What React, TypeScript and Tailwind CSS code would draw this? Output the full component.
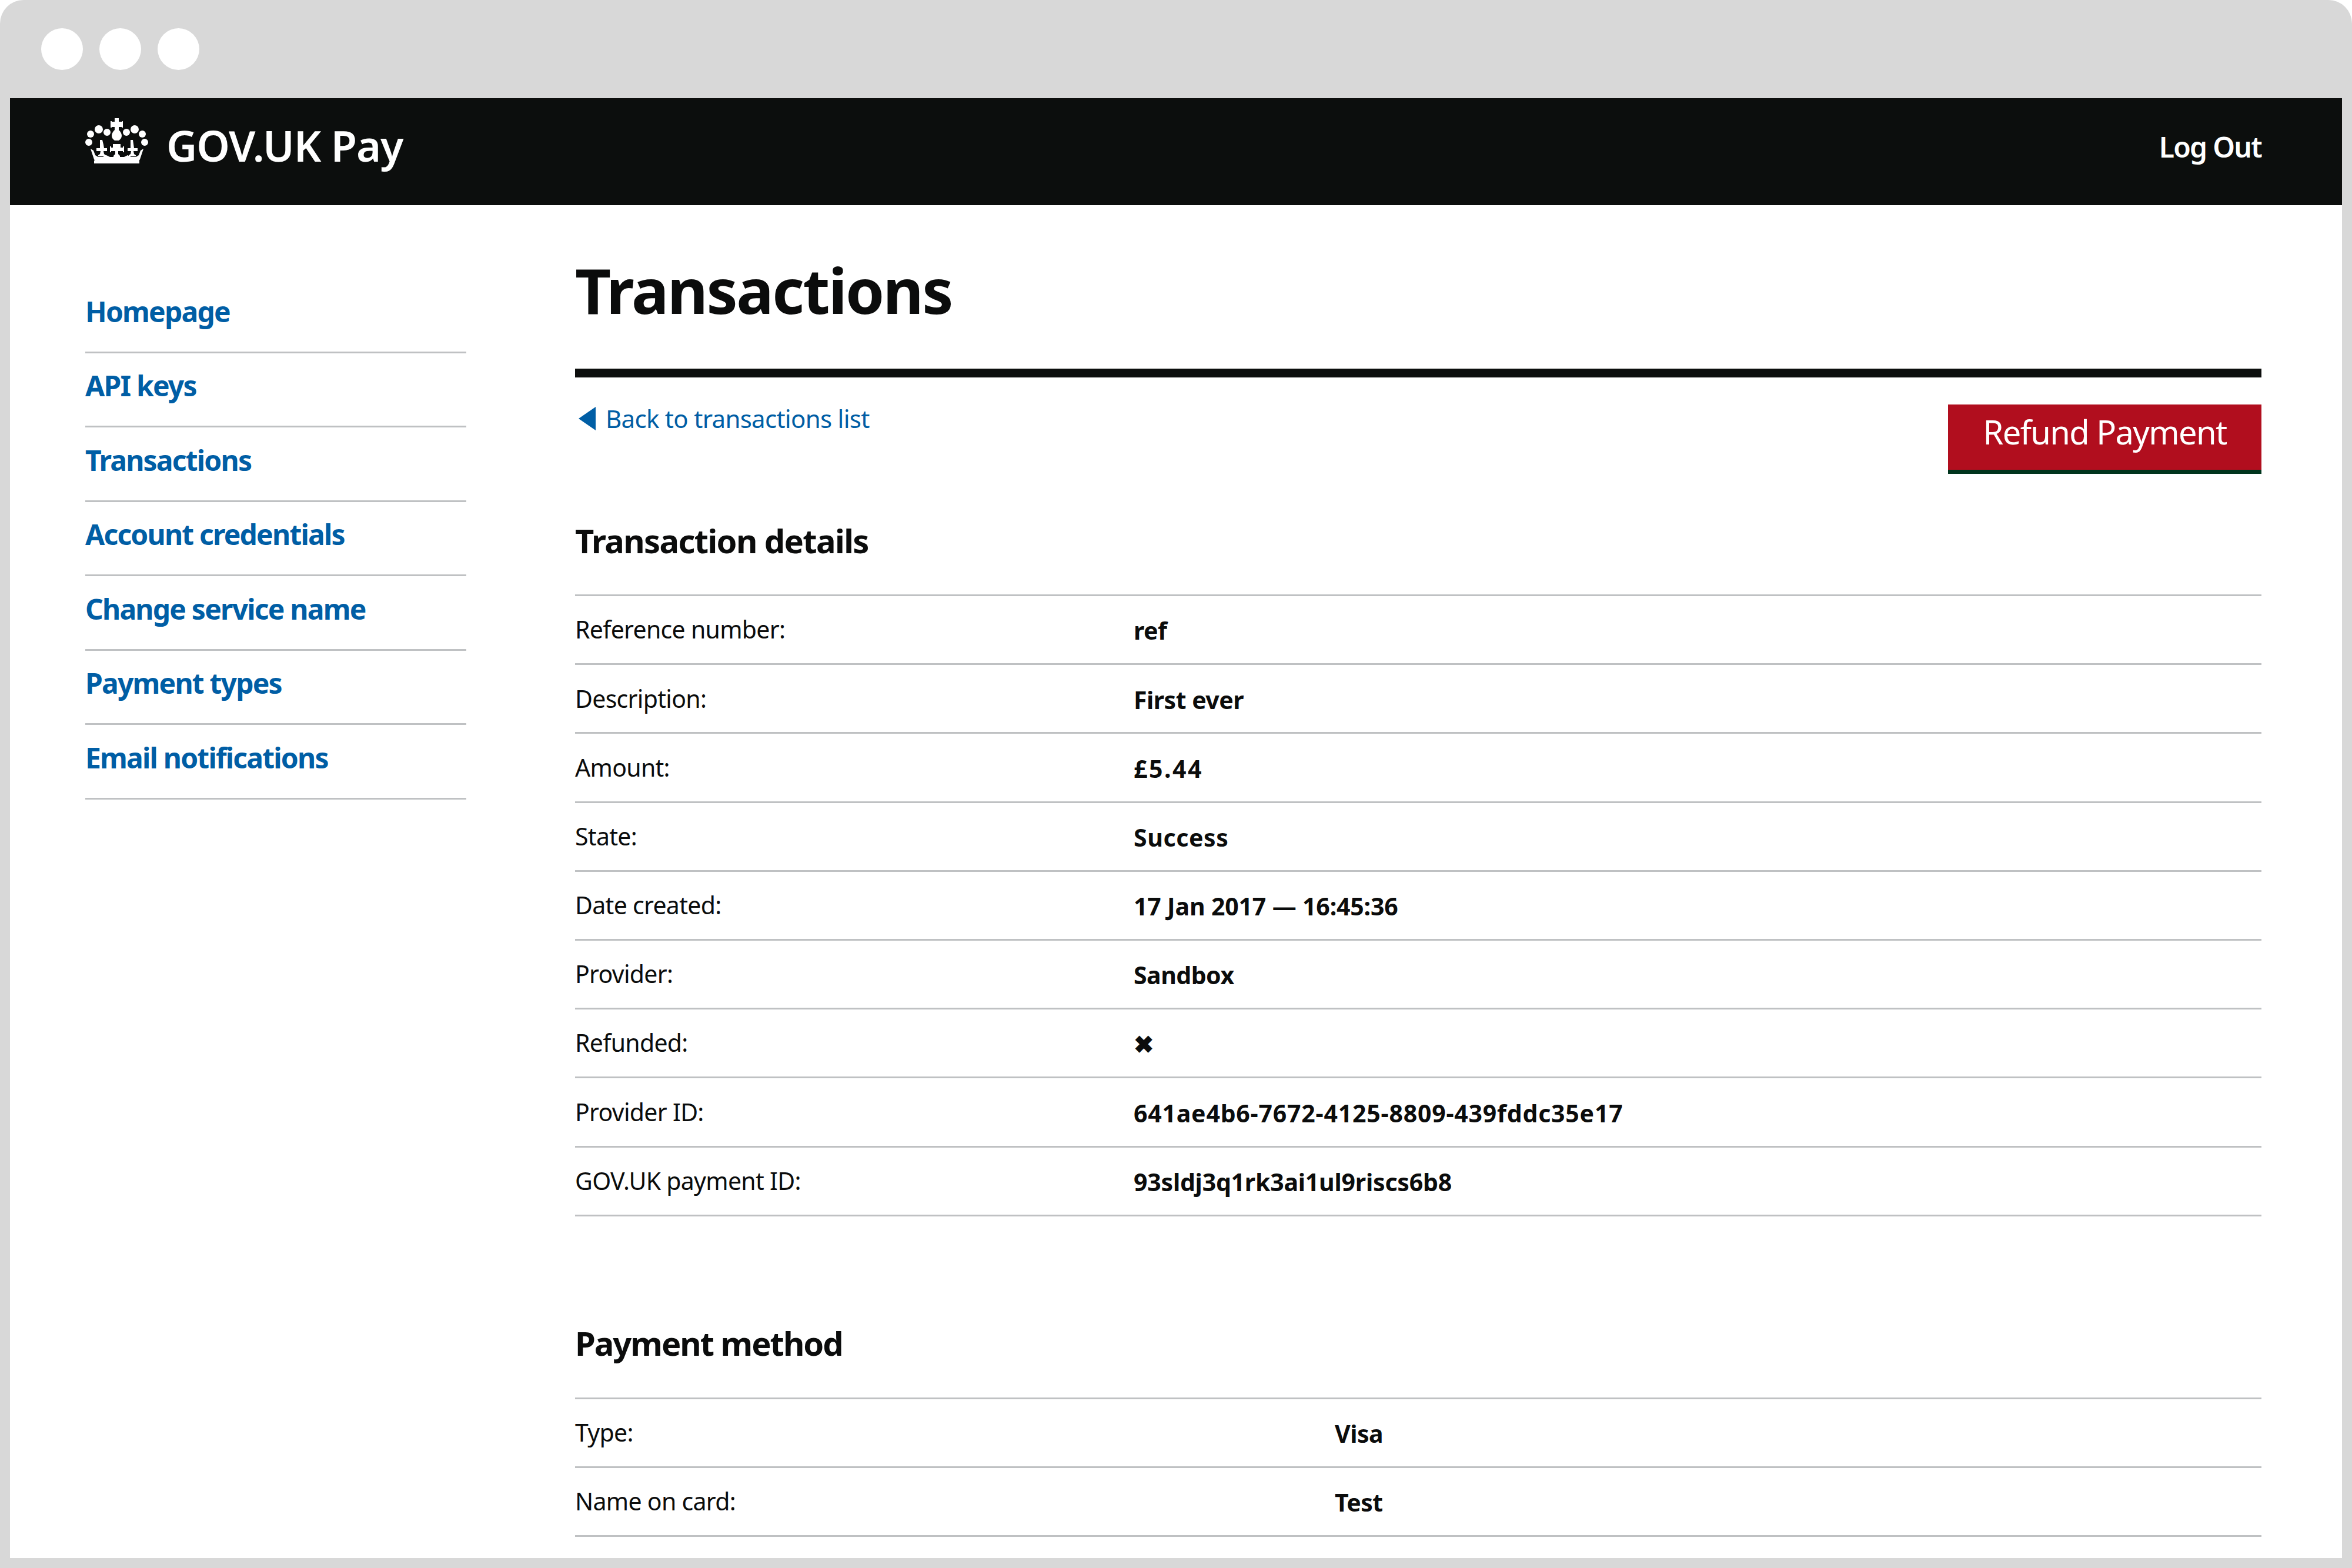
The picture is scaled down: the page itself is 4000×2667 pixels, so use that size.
import React from 'react';

const navItems = [
  'Homepage',
  'API keys',
  'Transactions',
  'Account credentials',
  'Change service name',
  'Payment types',
  'Email notifications',
];

const transactionRows: [string, string, string][] = [
  ['Reference number:', 'ref', 'tracking-[-0.5px]'],
  ['Description:', 'First ever', 'tracking-[-0.5px]'],
  ['Amount:', '£5.44', 'tracking-[2.5px]'],
  ['State:', 'Success', 'tracking-[0.6px]'],
  ['Date created:', '17 Jan 2017 — 16:45:36', 'tracking-[-0.15px]'],
  ['Provider:', 'Sandbox', 'tracking-[-0.5px]'],
  ['Refunded:', '✖', 'tracking-[-0.5px]'],
  ['Provider ID:', '641ae4b6-7672-4125-8809-439fddc35e17', 'tracking-[0.8px]'],
  ['GOV.UK payment ID:', '93sldj3q1rk3ai1ul9riscs6b8', 'tracking-[-0.2px]'],
];

const paymentRows: [string, string, string][] = [
  ['Type:', 'Visa', 'tracking-[-0.5px]'],
  ['Name on card:', 'Test', 'tracking-[-0.5px]'],
];

const Crown = () => (
  <svg width="108" height="78" viewBox="0 0 108 78" fill="#fff" className="shrink-0">
    <circle cx="6" cy="41" r="6" />
    <circle cx="9" cy="27" r="6" />
    <circle cx="23" cy="19" r="7" />
    <circle cx="37" cy="24" r="6" />
    <circle cx="70" cy="24" r="6" />
    <circle cx="84" cy="19" r="7" />
    <circle cx="97" cy="27" r="6" />
    <circle cx="101" cy="41" r="6" />
    <path d="M50 0h7v6h6v-1h-1v0h2v11h-2v-1h-5v5c3 3 5 6 5 10 0 3-2 6-5 8h-7c-3-2-5-5-5-8 0-4 2-7 5-10v-5h-5v1h-2V5h2v1h5z" />
    <path d="M25 37h4l2 8 1 6h5v5h-6l1 5 3 2v2H22v-2l3-2 1-5h-7v-5h6z" />
    <path d="M77 37h4l2 14h6v5h-7l1 5 3 2v2H74v-2l3-2 1-5h-6v-5h5z" />
    <path d="M47 44h13v6h4v-2h2v10h-2v-2h-8v5l3 3v2H48v-2l3-3v-5h-7v2h-2V48h2v2h3z" />
    <path d="M9 52l5 3 3 8 5 3h8l6-3 6 3h24l6-3 6 3h8l5-3 3-8 5-3-6 18-2 3H17l-2-3z" fillRule="evenodd" />
    <rect x="15" y="72" width="77" height="5" />
  </svg>
);

const DetailsTable = ({ rows, labelWidth }: { rows: [string, string, string][]; labelWidth: string }) => (
  <div className="border-t-[3px] border-[#bfc1c3]">
    {rows.map(([label, value, tracking]) => (
      <div key={label} className="flex h-[117.2px] items-center border-b-[3px] border-[#bfc1c3]">
        <div className={`${labelWidth} shrink-0 text-[41px] tracking-[-0.7px] text-[#0b0c0c]`}>{label}</div>
        <div className={`${tracking} pt-[4px] text-[41px] font-bold text-[#0b0c0c]`}>{value}</div>
      </div>
    ))}
  </div>
);

export default function App() {
  return (
    <div className="h-[2667px] w-[4000px] overflow-hidden bg-white font-['Noto_Sans',sans-serif]">
      <div className="flex h-full flex-col rounded-t-[40px] bg-[#d8d8d8] px-[17px] pb-[17px]">
        <div className="flex h-[167px] shrink-0 items-center gap-[28px] pl-[53px]">
          <span className="size-[71px] rounded-full bg-white" />
          <span className="size-[71px] rounded-full bg-white" />
          <span className="size-[71px] rounded-full bg-white" />
        </div>

        <div className="flex min-h-0 flex-1 flex-col overflow-hidden bg-white">
          <header className="flex h-[182px] shrink-0 items-start justify-between bg-[#0c0e0d] pl-[128px] pr-[137px] text-white">
            <div className="flex items-start pt-[34px]">
              <Crown />
              <span className="ml-[30px] mt-[-4px] text-[72px] leading-[100px] font-semibold tracking-[-1.1px]">GOV.UK Pay</span>
            </div>
            <a className="mt-[48px] text-[48px] leading-[70px] font-semibold tracking-[-1.7px]">Log Out</a>
          </header>

          <div className="flex min-h-0 flex-1 pl-[128px] pr-[137px]">
            <nav className="w-[648px] shrink-0 pt-[125px]">
              {navItems.map((item) => (
                <a key={item} className="flex h-[126.5px] items-center border-b-[3px] border-[#bfc1c3] pb-[12px] text-[48px] font-bold tracking-[-1.8px] text-[#005ea5]">
                  {item}
                </a>
              ))}
            </nav>

            <main className="ml-[185px] min-w-0 flex-1">
              <h1 className="pt-[72px] text-[106px] leading-[144px] font-bold tracking-[-2.5px] text-[#0b0c0c]">Transactions</h1>
              <div className="mt-[62px] h-[15px] bg-[#0c0e0d]" />

              <div className="flex items-start justify-between pt-[46px]">
                <a className="-mt-[5px] flex items-center gap-[17px] pl-[6px] text-[42px] leading-[58px] tracking-[-0.7px] text-[#005ea5]">
                  <svg width="29" height="40" viewBox="0 0 29 40" fill="#005ea5"><path d="M29 0v40L0 20z" /></svg>
                  Back to transactions list
                </a>
                <button className="h-[118px] w-[533px] border-b-[7px] border-[#00351d] bg-[#b10e1e] pb-[19px] text-[56px] tracking-[-1.6px] text-white">
                  Refund Payment
                </button>
              </div>

              <h2 className="mt-[85px] mb-[64px] text-[56px] leading-[56px] font-bold tracking-[-1.6px] text-[#0b0c0c]">Transaction details</h2>
              <DetailsTable rows={transactionRows} labelWidth="w-[950px]" />

              <h2 className="mt-[187px] mb-[65px] text-[56px] leading-[56px] font-bold tracking-[-2px] text-[#0b0c0c]">Payment method</h2>
              <DetailsTable rows={paymentRows} labelWidth="w-[1292px]" />
            </main>
          </div>
        </div>
      </div>
    </div>
  );
}
